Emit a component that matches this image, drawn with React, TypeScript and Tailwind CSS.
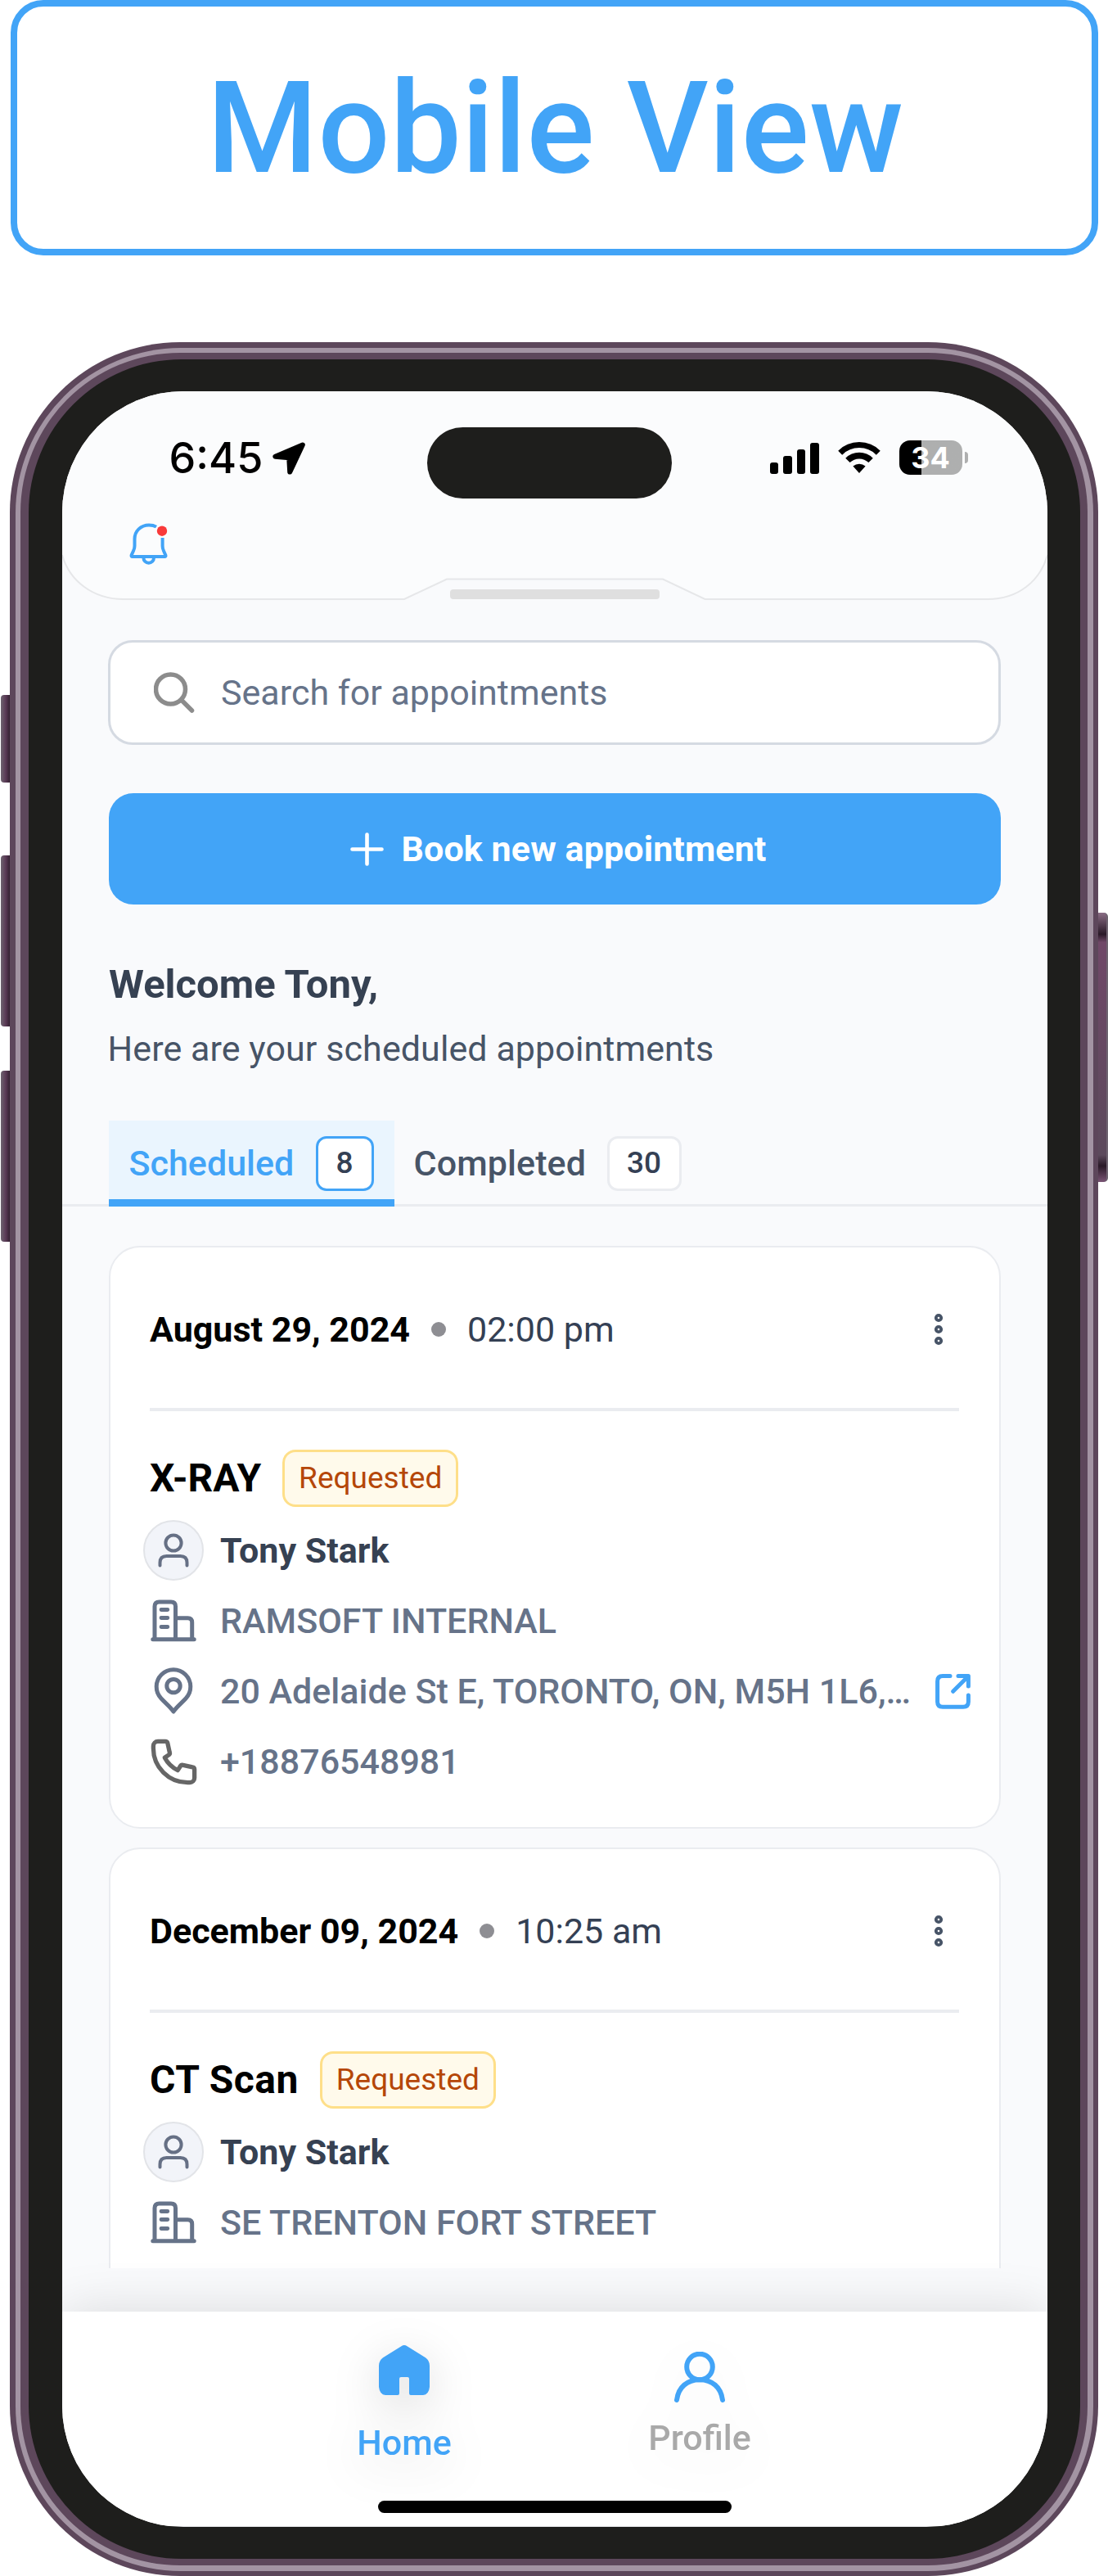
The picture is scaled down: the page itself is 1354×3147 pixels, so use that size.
import { type ReactNode } from 'react'

function T({ className = '', children }: { className?: string; children: ReactNode }) {
  return <span className={`whitespace-nowrap ${className}`}>{children}</span>
}

function BellIcon() {
  return (
    <svg width="46" height="50" viewBox="0 0 46 50" fill="none" className="overflow-visible">
      <path
        d="M33 4.6C30.5 3.1 27.5 2.5 24 2.5C14 2.5 6.5 10 6.5 19.5V28Q6.5 31 5 34L2.6 39.3Q2.2 41 3.8 41H43.2Q44.9 41 44.4 39.3L42 34Q40.6 31 40.6 28V18"
        stroke="#42a4f7"
        strokeWidth="4"
        strokeLinejoin="round"
      />
      <path d="M17.4 41.5V42.5A6.3 6.3 0 0 0 30 42.5V41.5" stroke="#42a4f7" strokeWidth="4" />
      <circle cx="40" cy="9.7" r="6.2" fill="#f93a3a" />
    </svg>
  )
}

function LocationArrow() {
  return (
    <svg width="40" height="40" viewBox="0 0 40 40">
      <path d="M36.8 3.4L3.4 17.8L20.2 19.2L21.2 36.6Z" stroke="#000" strokeWidth="6" strokeLinejoin="round" />
    </svg>
  )
}

function SignalBars() {
  return (
    <div className="flex h-[39px] items-end gap-[6px]">
      <div className="h-[14px] w-[10.5px] rounded-[3px] bg-black" />
      <div className="h-[22px] w-[10.5px] rounded-[3px] bg-black" />
      <div className="h-[30px] w-[10.5px] rounded-[3px] bg-black" />
      <div className="h-[38px] w-[10.5px] rounded-[3px] bg-black" />
    </div>
  )
}

function WifiIcon() {
  return (
    <svg width="52" height="39" viewBox="0 0 52 39" fill="none">
      <path d="M2.7 13.2A33 33 0 0 1 49.3 13.2" stroke="#000" strokeWidth="7" />
      <path d="M11.9 22.4A20 20 0 0 1 40.1 22.4" stroke="#000" strokeWidth="7.6" />
      <path d="M26 38L18.4 29.6A11.3 11.3 0 0 1 33.6 29.6Z" fill="#000" />
    </svg>
  )
}

function UserIcon() {
  return (
    <svg width="38" height="42" viewBox="0 0 38 42" fill="none" stroke="#667085" strokeWidth="4" strokeLinecap="round">
      <circle cx="19" cy="12" r="9.6" />
      <path d="M2.5 39.5V36Q2.5 28 10.5 28H27.5Q35.5 28 35.5 36V39.5" />
    </svg>
  )
}

function BuildingIcon() {
  return (
    <svg width="56" height="52" viewBox="0 0 56 52" fill="none" stroke="#667389" strokeWidth="5" strokeLinecap="round">
      <path d="M2.8 48.8H53.2" />
      <path d="M5 48V8.5Q5 2.9 10.5 2.9H25Q30.5 2.9 30.5 8.5V48" />
      <path d="M31 22.7H45.5Q50.7 22.7 50.7 28V48" />
      <path d="M13 12.5H20.8M13 22.5H20.8M13 33.5H20.8" strokeWidth="4.8" />
    </svg>
  )
}

function PinIcon() {
  return (
    <svg width="48" height="58" viewBox="0 0 48 58" fill="none" stroke="#667389" strokeWidth="5" strokeLinejoin="round">
      <path d="M24 54C20.5 48.5 13.5 43 9 38A20.8 20.8 0 1 1 39 38C34.5 43 27.5 48.5 24 54Z" />
      <circle cx="24" cy="22.6" r="8.2" />
    </svg>
  )
}

function PhoneIcon() {
  return (
    <svg width="67" height="67" viewBox="0 0 24 24" fill="none" stroke="#666666" strokeWidth="1.9" strokeLinejoin="round">
      <path d="M3 5a2 2 0 012-2h3.28a1 1 0 01.948.684l.9 4.093a1 1 0 01-.502 1.21l-1.657 1.13a13 13 0 005.716 5.516l1.13-1.757a1 1 0 011.21-.502l4.093.898a1 1 0 01.884.949V19a2 2 0 01-2 2h-1C9.716 21 3 14.284 3 6V5z" />
    </svg>
  )
}

function OpenIcon() {
  return (
    <svg width="43" height="43" viewBox="0 0 43 43" fill="none" stroke="#42a4f7" strokeWidth="5" strokeLinecap="round">
      <path d="M18 2.6H9Q2.6 2.6 2.6 9V34Q2.6 40.2 9 40.2H34Q40.4 40.2 40.4 34V26" />
      <path d="M28 2.6H40.4V15M40 3L21.7 21.3" strokeLinejoin="round" />
    </svg>
  )
}

function KebabIcon() {
  return (
    <svg width="12" height="40" viewBox="0 0 12 40" fill="none" stroke="#475467" strokeWidth="3.8">
      <circle cx="6" cy="6" r="3.2" />
      <circle cx="6" cy="20" r="3.2" />
      <circle cx="6" cy="34" r="3.2" />
    </svg>
  )
}

function HomeIcon() {
  return (
    <svg width="62" height="61" viewBox="0 0 62 61" fill="#42a4f7">
      <path d="M27.5 1.3Q31 -1.2 34.5 1.3L57 15.2Q62 18.8 62 25V51Q61 60.5 54 61H39Q37 61 37 59V41Q37 39 35 39H27Q25 39 25 41V59Q25 61 23 61H8Q1 60.5 0 51V25Q0 18.8 5 15.2Z" />
    </svg>
  )
}

function ProfileIcon() {
  return (
    <svg width="62" height="62" viewBox="0 0 62 62" fill="none" stroke="#42a4f7" strokeWidth="6" strokeLinecap="round">
      <circle cx="31" cy="18.5" r="15.8" />
      <path d="M3 59C5 43 16 34.3 31 34.3S57 43 59 59" />
    </svg>
  )
}

type Appointment = {
  date: string
  time: string
  exam: string
  examClass: string
  patient: string
  clinic: string
  address?: string
  phone?: string
}

const appointments: Appointment[] = [
  {
    date: 'August 29, 2024',
    time: '02:00 pm',
    exam: 'X-RAY',
    examClass: 'tracking-normal',
    patient: 'Tony Stark',
    clinic: 'RAMSOFT INTERNAL',
    address: '20 Adelaide St E, TORONTO, ON, M5H 1L6,…',
    phone: '+18876548981',
  },
  {
    date: 'December 09, 2024',
    time: '10:25 am',
    exam: 'CT Scan',
    examClass: 'tracking-[0.5px]',
    patient: 'Tony Stark',
    clinic: 'SE TRENTON FORT STREET',
  },
]

function Row({ icon, children }: { icon: ReactNode; children: ReactNode }) {
  return (
    <div className="-ml-[8px] flex h-[86px] items-center gap-[20px]">
      <div className="flex w-[74px] shrink-0 items-center justify-center">{icon}</div>
      {children}
    </div>
  )
}

function Card({ a }: { a: Appointment }) {
  return (
    <article className="h-[712px] shrink-0 rounded-[38px] border-2 border-[#eaecf0] bg-white px-[48.5px]">
      <header className="flex h-[200px] items-center border-b-4 border-[#eaecf0] pt-[4px]">
        <T className="text-[43px] font-bold text-black">{a.date}</T>
        <div className="ml-[26px] size-[18px] rounded-full bg-[#8e8e93]" />
        <T className="ml-[26px] text-[43px] text-[#344054]">{a.time}</T>
        <div className="mr-[19px] ml-auto">
          <KebabIcon />
        </div>
      </header>
      <div className="mt-[47px] flex h-[70px] items-center">
        <T className={`text-[48px] font-bold text-black ${a.examClass}`}>{a.exam}</T>
        <div className="ml-[26px] flex h-[70px] w-[215px] items-center justify-center rounded-[16px] border-[3px] border-[#fedf89] bg-[#fffaeb]">
          <T className="text-[37px] text-[#b54708]">Requested</T>
        </div>
      </div>
      <div className="mt-[10px]">
        <Row
          icon={
            <div className="flex size-[74px] items-center justify-center rounded-full border-2 border-[#e2e4e8] bg-[#f2f4f9]">
              <UserIcon />
            </div>
          }
        >
          <T className="text-[43px] font-bold text-[#364152]">{a.patient}</T>
        </Row>
        <Row icon={<BuildingIcon />}>
          <T className="text-[43px] font-medium text-[#667389]">{a.clinic}</T>
        </Row>
        {a.address && (
          <Row icon={<PinIcon />}>
            <T className="text-[43px] font-medium text-[#667389]">{a.address}</T>
            <div className="mr-[-14px] ml-auto shrink-0">
              <OpenIcon />
            </div>
          </Row>
        )}
        {a.phone && (
          <Row icon={<PhoneIcon />}>
            <T className="text-[43px] font-medium text-[#667389]">{a.phone}</T>
          </Row>
        )}
      </div>
    </article>
  )
}

function Header() {
  return (
    <header className="relative h-[254px]">
      <svg width="1204" height="256" viewBox="0 0 1204 256" className="absolute top-0 left-0">
        <path
          d="M0 0H1204V200C1195 232 1168 254 1131 254H785.5L734 229.5H470L418 254H75C38 254 9 232 0 200Z"
          fill="#fbfcfd"
        />
        <path
          d="M1204 200C1195 232 1168 254 1131 254H785.5L734 229.5H470L418 254H75C38 254 9 232 0 200"
          fill="none"
          stroke="#e6e7e9"
          strokeWidth="2"
        />
      </svg>
      <div className="relative flex flex-col">
        <div className="mt-[44px] flex h-[87px] items-center">
          <div className="-mt-[12px] ml-[131px] flex w-[315px] items-center">
            <T className="w-[126px] font-['Inter'] text-[52px] font-medium text-black">6:45</T>
            <LocationArrow />
          </div>
          <div className="h-[87px] w-[299px] rounded-full bg-[#1e1e1c]" />
          <div className="-mt-[13px] ml-[120px] flex items-center">
            <SignalBars />
            <div className="ml-[23px]">
              <WifiIcon />
            </div>
            <div className="ml-[23px] flex h-[42px] w-[77px] items-center justify-center rounded-[13px] bg-linear-to-r from-black from-35% to-[#aeafaf] to-35%">
              <T className="font-['Inter'] text-[36px] leading-none font-bold text-white">34</T>
            </div>
            <div className="ml-[3px] h-[14px] w-[4px] rounded-r-full bg-[#aeafaf]" />
          </div>
        </div>
        <div className="mt-[30px] ml-[82px]">
          <BellIcon />
        </div>
        <div className="mx-auto mt-[31px] h-[12px] w-[256px] rounded-[4px] bg-[#dfdfdf]" />
      </div>
    </header>
  )
}

function Tabs() {
  return (
    <div className="relative mt-[58px] flex h-[105px] px-[57px]">
      <div className="absolute inset-x-0 bottom-0 h-[3px] bg-[#eaecf0]" />
      <div className="relative flex w-[349px] items-center justify-between border-b-[9px] border-[#42a4f7] bg-[#eaf5fe] pt-[8px] pr-[25px] pl-[25px]">
        <T className="text-[43px] font-medium text-[#42a4f7]">Scheduled</T>
        <div className="flex h-[67px] w-[71px] items-center justify-center rounded-[13px] border-[3px] border-[#42a4f7] bg-white">
          <T className="text-[37px] font-medium text-[#344054]">8</T>
        </div>
      </div>
      <div className="relative flex w-[376px] items-center justify-between border-b-[9px] border-transparent pt-[8px] pr-[25px] pl-[24px]">
        <T className="text-[43px] font-medium tracking-[0.1px] text-[#475467]">Completed</T>
        <div className="flex h-[67px] w-[91px] items-center justify-center rounded-[13px] border-[3px] border-[#eaecf0] bg-white">
          <T className="text-[37px] font-medium text-[#344054]">30</T>
        </div>
      </div>
    </div>
  )
}

function Nav() {
  return (
    <nav className="relative h-[262px] bg-white shadow-[0_0_60px_rgba(0,0,0,0.13)]">
      <div className="flex h-[231px] pl-[238px]">
        <div className="flex w-[361px] flex-col items-center pt-[41px] drop-shadow-[0_14px_28px_rgba(0,0,0,0.15)]">
          <HomeIcon />
          <T className="mt-[33px] text-[43px] leading-[50px] font-medium text-[#42a4f7]">Home</T>
        </div>
        <div className="flex w-[361px] flex-col items-center pt-[49px] drop-shadow-[0_14px_28px_rgba(0,0,0,0.06)]">
          <ProfileIcon />
          <T className="mt-[18px] text-[43px] leading-[50px] font-medium text-[#a9a9a9]">Profile</T>
        </div>
      </div>
      <div className="relative mx-auto h-[15px] w-[432px] rounded-full bg-black" />
    </nav>
  )
}

function LeftKey({ className }: { className: string }) {
  return (
    <div
      className={`absolute -left-[11px] w-[12px] rounded-l-[4px] bg-linear-to-r from-[#6e6470] via-[#5a3a56] via-50% to-[#2d1c2b] ${className}`}
    />
  )
}

export default function App() {
  return (
    <div className="flex h-[3147px] w-[1354px] flex-col overflow-hidden bg-white font-['Roboto',sans-serif]">
      <div className="ml-[13px] flex h-[312px] w-[1329px] shrink-0 items-center justify-center rounded-[40px] border-8 border-[#42a4f7] pt-[2px] pl-[2px]">
        <T className="text-[155px] leading-none font-medium tracking-[0.25px] text-[#42a4f7]">Mobile View</T>
      </div>
      <div className="relative mt-[106px] ml-[12px] h-[2729px] w-[1330px] shrink-0">
        <LeftKey className="top-[431px] h-[107px]" />
        <LeftKey className="top-[627px] h-[209px]" />
        <LeftKey className="top-[890px] h-[209px]" />
        <div className="absolute top-[697px] -right-[12px] h-[329px] w-[13px] rounded-r-[5px] border-r-2 border-[#6e6470] bg-[linear-gradient(#8a6d85,#2a1a28_8%,#704868_11%,#5c4a5c_90%,#2a1a28_94%,#7a5575)]" />
        <div className="relative size-full rounded-[208px] bg-[#5d475b] p-[6.5px]">
          <div className="size-full rounded-[202px] bg-[#a394a3] p-[6.5px]">
            <div className="size-full rounded-[195px] bg-[#5d475b] px-[9.5px] py-[8px]">
              <div className="size-full rounded-[187px] bg-[#1e1e1c] pt-[39px] pr-[40px] pb-[39px] pl-[41px]">
                <div className="flex size-full flex-col overflow-hidden rounded-[148px] bg-[#f9fafc]">
                  <Header />
                  <main className="flex flex-col">
                    <div className="mx-[56.5px] mt-[50px] flex h-[128px] items-center rounded-[30px] border-[3px] border-[#d5dae2] bg-white pl-[53px]">
                      <svg width="50" height="50" viewBox="0 0 50 50" fill="none" stroke="#8c8c8c" strokeWidth="5.5" strokeLinecap="round">
                        <circle cx="20.5" cy="21" r="18" />
                        <path d="M34 34.5L46.5 47" />
                      </svg>
                      <T className="ml-[32px] text-[43px] text-[#667389]">Search for appointments</T>
                    </div>
                    <div className="mx-[57px] mt-[59px] flex h-[136px] items-center justify-center gap-[21px] rounded-[30px] bg-[#42a4f7] pl-[10px]">
                      <svg width="41" height="41" viewBox="0 0 41 41" stroke="#fff" strokeWidth="4.6" strokeLinecap="round">
                        <path d="M20.5 2.5V38.5M2.5 20.5H38.5" />
                      </svg>
                      <T className="text-[43px] font-bold tracking-[0.1px] text-white">Book new appointment</T>
                    </div>
                    <T className="mt-[68px] ml-[57.5px] text-[49px] leading-[60px] font-bold text-[#364152]">Welcome Tony,</T>
                    <T className="mt-[18px] ml-[56px] text-[43px] leading-[60px] tracking-[0.08px] text-[#475467]">
                      Here are your scheduled appointments
                    </T>
                    <Tabs />
                    <div className="mx-[57px] mt-[48px] flex h-[1249px] flex-col gap-[23px] overflow-hidden">
                      {appointments.map((a) => (
                        <Card key={a.date} a={a} />
                      ))}
                    </div>
                  </main>
                  <div className="h-[53px] shrink-0" />
                  <Nav />
                </div>
              </div>
            </div>
          </div>
        </div>
      </div>
    </div>
  )
}
